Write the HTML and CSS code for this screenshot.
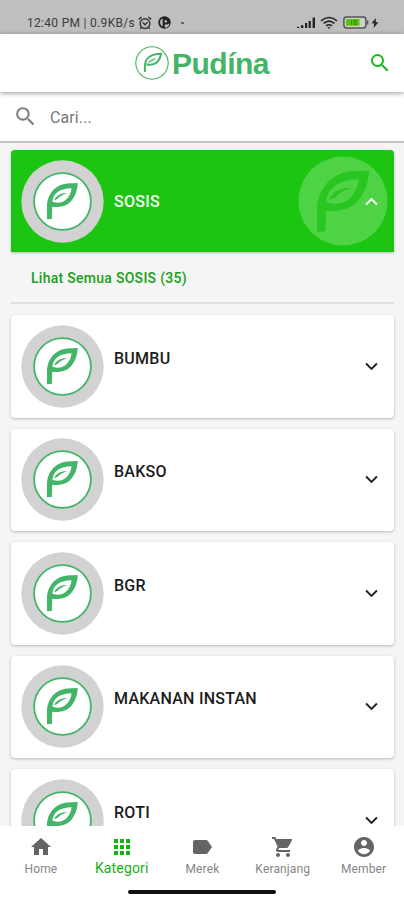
FILE: index.html
```
<!DOCTYPE html>
<html lang="id">
<head>
<meta charset="utf-8">
<title>Pudina</title>
<link rel="stylesheet" href="styles.css">
</head>
<body>
<svg class="defs" width="0" height="0">
  <symbol id="leaf" viewBox="64 54 160 188">
    <path fill-rule="evenodd" d="M66 240V178C66 152 72 128 84 110C100 84 128 62 168 58Q190 56 222 56C221 90 211 122 188 148C168 170 136 181 93 176L91 238ZM94 151C95 132 104 112 122 100C140 88 162 83 191 82C188 106 178 127 162 141C144 157 120 159 94 151Z"/>
    <path d="M102 144C112 119 138 105 170 108C148 114 132 123 119 137Z"/>
  </symbol>
  <symbol id="badge" viewBox="0 0 83 83">
    <circle cx="41.5" cy="41.5" r="41.2" fill="#d2d2d2"/>
    <circle cx="41.5" cy="41.5" r="28.4" fill="#fff" stroke="#43b468" stroke-width="1.8"/>
    <use href="#leaf" x="25.5" y="22.6" width="31.6" height="37.1" fill="#43b468"/>
  </symbol>
  <symbol id="search" viewBox="0 0 24 24">
    <path d="M15.5 14h-.79l-.28-.27A6.47 6.47 0 0 0 16 9.5 6.5 6.5 0 1 0 9.5 16c1.61 0 3.09-.59 4.23-1.57l.27.28v.79l5 4.99L20.49 19l-4.99-5zm-6 0C7.01 14 5 11.99 5 9.5S7.01 5 9.5 5 14 7.01 14 9.5 11.99 14 9.5 14z"/>
  </symbol>
  <symbol id="chevron" viewBox="0 0 12 8"><path d="M1 1.2 6 6.2 11 1.2" fill="none" stroke="currentColor" stroke-width="1.8"/></symbol>
</svg>
<div class="app">
  <div class="status">
    <span class="clock">12:40 PM | 0.9KB/s</span>
    <svg class="alarm" viewBox="0 0 14 14" fill="none" stroke="#333" stroke-width="1.4"><circle cx="7" cy="7.6" r="4.9"/><path d="M.8 3.4 3.6 1M13.2 3.4 10.4 1M4.6 6.6 7 8.8 9.6 6.2M3.5 11.4 2.3 13M10.5 11.4l1.2 1.6"/></svg>
    <svg class="app-dot" viewBox="0 0 13 13"><circle cx="6.5" cy="6.5" r="6.2" fill="#222"/><path d="M2.2 5.2Q2.800 3 4.600 2.600V10.600Q2.600 9.400 2.200 7.200ZM6.600 4.200H9V6.600H6.600ZM6.800 8.600Q9.500 8.600 11 7.400V9.400L8.600 11.400H6.800Z" fill="#bfbfbf"/></svg>
    <span class="dot"></span>
    <svg class="signal" viewBox="0 0 19 12" fill="#222"><path d="M0 9.8h2.2V11H0zM4 8.3h2.3V11H4zM8 6h2.2v5H8zM11.6 4h2.2v7h-2.2zM15.6.5H18V11h-2.4z"/></svg>
    <svg class="wifi" viewBox="0 0 18 14" fill="none" stroke="#222" stroke-width="1.6"><path d="M1 4.8Q9-1.8 17 4.8M3.6 7.4Q9 2.8 14.4 7.4M6 9.9Q9 7.5 12 9.9"/><path d="m7.4 11.2h3.2L9 13z" fill="#222" stroke="none"/></svg>
    <svg class="battery" viewBox="0 0 26 13"><rect x=".9" y=".9" width="22" height="11" rx="2.6" fill="#d0d0d0" stroke="#555" stroke-width="1.5"/><rect x="3" y="3" width="13.5" height="6.8" fill="#5cc40c"/><path d="M8.5 4.5v4M11.2 4.5h2v4h-2z" stroke="#3b8a10" fill="none"/><path d="M24.6 4.5v4" stroke="#555" stroke-width="1.5"/></svg>
    <svg class="bolt" viewBox="0 0 8 10"><path d="M5 0 .5 5.2H3.2L2.6 10 7.4 4.2H4.6Z" fill="#222"/></svg>
  </div>
  <header class="header">
    <div class="brand">
      <svg class="brand-mark" viewBox="0 0 34 34" fill="none" stroke="#43b468"><circle cx="17" cy="17" r="16.2" stroke-width="1.1"/><path d="M9.900 26V20C10 13 15 7.900 26 7.700C25 15 20.500 20 11.500 18.500" stroke-width="2"/><path d="M12.500 17.500Q14.500 13.500 20 12.500Q18.500 15.500 14 16" stroke-width=".9"/></svg>
      <span class="brand-name">Pudína</span>
    </div>
    <svg class="header-search"><use href="#search"/></svg>
  </header>
  <div class="searchbar">
    <svg class="field-icon"><use href="#search"/></svg>
    <span class="placeholder">Cari...</span>
  </div>
  <main class="list">
    <section class="card open">
      <svg class="badge"><use href="#badge"/></svg>
      <h2>SOSIS</h2>
      <svg class="watermark" viewBox="0 0 90 90"><circle cx="45" cy="45" r="44.5" fill="#4dd343"/><use href="#leaf" x="18.3" y="14" width="53.3" height="62.7" fill="#29c520"/></svg>
      <svg class="chevron"><use href="#chevron"/></svg>
    </section>
    <div class="submenu">Lihat Semua SOSIS (35)</div>
    <section class="card"><svg class="badge"><use href="#badge"/></svg><h2>BUMBU</h2><svg class="chevron"><use href="#chevron"/></svg></section>
    <section class="card"><svg class="badge"><use href="#badge"/></svg><h2>BAKSO</h2><svg class="chevron"><use href="#chevron"/></svg></section>
    <section class="card"><svg class="badge"><use href="#badge"/></svg><h2>BGR</h2><svg class="chevron"><use href="#chevron"/></svg></section>
    <section class="card"><svg class="badge"><use href="#badge"/></svg><h2>MAKANAN INSTAN</h2><svg class="chevron"><use href="#chevron"/></svg></section>
    <section class="card"><svg class="badge"><use href="#badge"/></svg><h2>ROTI</h2><svg class="chevron"><use href="#chevron"/></svg></section>
  </main>
  <footer class="footer">
    <nav class="tabs">
      <a class="tab"><svg viewBox="0 0 24 24"><path d="M10 20v-6h4v6h5v-8h3L12 3 2 12h3v8z"/></svg><span>Home</span></a>
      <a class="tab active"><svg viewBox="0 0 24 24"><path d="M4 8h4V4H4v4zm6 12h4v-4h-4v4zm-6 0h4v-4H4v4zm0-6h4v-4H4v4zm6 0h4v-4h-4v4zm6-10v4h4V4h-4zm-6 4h4V4h-4v4zm6 6h4v-4h-4v4zm0 6h4v-4h-4v4z"/></svg><span>Kategori</span></a>
      <a class="tab"><svg viewBox="0 0 24 24"><path d="M17.63 5.84C17.27 5.33 16.67 5 16 5L5 5.01C3.9 5.01 3 5.9 3 7v10c0 1.1.9 1.99 2 1.99L16 19c.67 0 1.27-.33 1.63-.84L22 12l-4.37-6.16z"/></svg><span>Merek</span></a>
      <a class="tab"><svg viewBox="0 0 24 24"><path d="M7 18c-1.1 0-1.99.9-1.99 2S5.9 22 7 22s2-.9 2-2-.9-2-2-2zM1 2v2h2l3.6 7.59-1.35 2.45c-.16.28-.25.61-.25.96 0 1.1.9 2 2 2h12v-2H7.42c-.14 0-.25-.11-.25-.25l.03-.12.9-1.63h7.45c.75 0 1.41-.41 1.75-1.03l3.58-6.49A1 1 0 0 0 20 4H5.21l-.94-2H1zm16 16c-1.1 0-1.99.9-1.99 2s.89 2 1.99 2 2-.9 2-2-.9-2-2-2z"/></svg><span>Keranjang</span></a>
      <a class="tab"><svg viewBox="0 0 24 24"><path d="M12 2C6.48 2 2 6.48 2 12s4.48 10 10 10 10-4.48 10-10S17.52 2 12 2zm0 3c1.66 0 3 1.34 3 3s-1.34 3-3 3-3-1.34-3-3 1.34-3 3-3zm0 14.2c-2.5 0-4.71-1.28-6-3.22.03-1.99 4-3.08 6-3.08 1.99 0 5.97 1.09 6 3.08-1.29 1.94-3.5 3.22-6 3.22z"/></svg><span>Member</span></a>
    </nav>
    <div class="home-bar"></div>
  </footer>
</div>
</body>
</html>
```

FILE: styles.css
```
* { box-sizing: border-box; }
body { margin: 0; font-family: Roboto, "Liberation Sans", sans-serif; background: #f5f5f5; }
.defs { position: absolute; }
svg { display: block; flex: none; }
.app { width: 404px; height: 900px; display: flex; flex-direction: column; overflow: hidden; }

.status { flex: none; height: 34px; background: #bfbfbf; display: flex; align-items: center; padding: 11px 25px 0 27px; color: #3c3c3c; }
.clock { font-size: 12px; width: 111px; white-space: nowrap; letter-spacing: .3px; }
.alarm { width: 14px; height: 14px; }
.app-dot { width: 13px; height: 13px; margin-left: 6px; }
.dot { width: 3px; height: 2px; margin-left: 10px; background: #666; }
.signal { width: 19px; height: 12px; margin-left: auto; }
.wifi { width: 18px; height: 14px; margin-left: 4px; }
.battery { width: 26px; height: 13px; margin-left: 5px; }
.bolt { width: 8px; height: 10px; margin-left: 2px; }

.header { flex: none; height: 58px; background: #fff; display: flex; align-items: center; justify-content: flex-end; padding-right: 12px; z-index: 2; box-shadow: 0 1px 5px rgba(0,0,0,.42); }
.brand { display: flex; align-items: center; margin-right: 97px; }
.brand-mark { width: 34px; height: 34px; }
.brand-name { font: bold 30px/36px "Liberation Sans", Arial, sans-serif; width: 99px; margin: 2px 0 0 3px; letter-spacing: -.5px; color: #43b468; white-space: nowrap; }
.header-search { width: 24px; height: 24px; fill: #1bb91b; }

.searchbar { flex: none; height: 51px; background: #fff; border-bottom: 2px solid #c3c3c3; display: flex; align-items: center; padding-left: 13px; }
.field-icon { width: 25px; height: 25px; fill: #808080; }
.placeholder { margin: 2px 0 0 12px; font-size: 16px; color: #777; letter-spacing: .1px; }

.list { flex: 1; min-height: 0; overflow: hidden; padding: 7px 10px 0 11px; }
.card { position: relative; height: 102.4px; margin-bottom: 11px; padding: 0 16px 0 10px; display: flex; align-items: center; background: #fff; border-radius: 4px; box-shadow: 0 1px 3px rgba(0,0,0,.25); }
.badge { width: 83px; height: 83px; }
.card h2 { margin: 0 0 15px 10px; font-size: 16px; line-height: 20px; font-weight: 500; color: #1c1c1c; letter-spacing: .25px; }
.chevron { position: relative; width: 13px; height: 9px; margin-left: auto; color: #222; }
.open { background: #1cc511; border-radius: 4px 4px 0 0; margin-bottom: 0; }
.open h2 { margin: 2px 0 0 10px; color: #f2fff0; }
.open .chevron { color: #fff; transform: rotate(180deg); }
.watermark { position: absolute; right: 6px; top: 6px; width: 90px; height: 90px; }
.submenu { height: 52px; margin-bottom: 11px; border-bottom: 2px solid #e0e0e0; padding-left: 20px; font-size: 14px; line-height: 52px; font-weight: 500; color: #18a018; letter-spacing: .28px; }

.footer { flex: none; height: 74px; background: #fff; z-index: 2; display: flex; flex-direction: column; align-items: center; }
.tabs { width: 404px; height: 64px; display: grid; grid-template-columns: repeat(5, 1fr); }
.tab { display: flex; flex-direction: column; align-items: center; padding-top: 9px; color: #858585; font-size: 12px; line-height: 16px; letter-spacing: .15px; }
.tab svg { width: 24px; height: 24px; margin-bottom: 2px; fill: #646464; }
.tab:first-child, .active, .tab:nth-child(3) { padding-left: 1px; }
.active { color: #12b412; font-size: 14px; }
.active svg { fill: #12b412; margin-bottom: 1px; }
.home-bar { width: 148px; height: 4px; border-radius: 2px; background: #111; }
```
